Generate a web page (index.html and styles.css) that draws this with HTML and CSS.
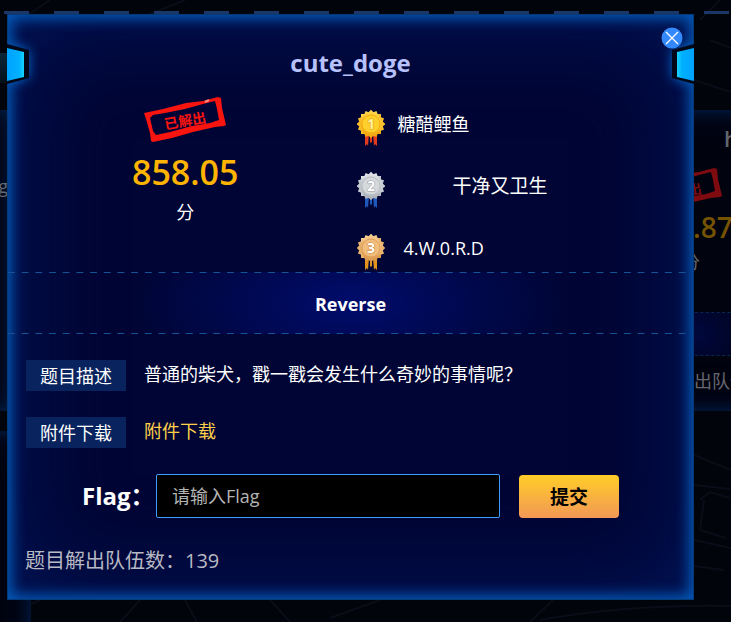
FILE: index.html
```html
<!DOCTYPE html>
<html lang="zh-CN">
<head>
<meta charset="utf-8">
<meta name="viewport" content="width=device-width, initial-scale=1">
<title>cute_doge</title>
<link rel="stylesheet" href="styles.css">
</head>
<body>
<svg class="defs" aria-hidden="true">
  <defs>
    <linearGradient id="gold" x1="0" y1="0" x2="1" y2="1"><stop offset="0" stop-color="#ffd84a"/><stop offset="1" stop-color="#f0a30c"/></linearGradient>
    <linearGradient id="silver" x1="0" y1="0" x2="1" y2="1"><stop offset="0" stop-color="#e2e5e8"/><stop offset="1" stop-color="#a9b0b8"/></linearGradient>
    <linearGradient id="bronze" x1="0" y1="0" x2="1" y2="1"><stop offset="0" stop-color="#f9cf92"/><stop offset="1" stop-color="#d9954a"/></linearGradient>
    <linearGradient id="tab" x1="0" y1="0" x2="1" y2="0"><stop offset="0" stop-color="#00a2ff"/><stop offset=".7" stop-color="#00b0ff"/><stop offset="1" stop-color="#14d4ff"/></linearGradient>
    <g id="burst">
      <rect x="-10" y="-10" width="20" height="20"/>
      <rect x="-10" y="-10" width="20" height="20" transform="rotate(22.5)"/>
      <rect x="-10" y="-10" width="20" height="20" transform="rotate(45)"/>
      <rect x="-10" y="-10" width="20" height="20" transform="rotate(67.5)"/>
    </g>
    <g id="ribbon">
      <path d="M8 25h4l-1 12-1-2-2 2zM16 25h4v12l-2-2-1 2zM13 27h2v6l-1 1-1-1z"/>
    </g>
    <g id="stamp-frame">
      <path fill-rule="evenodd" d="M0 16 19 12 42 6 59 4 74 0l3 1 1 10 4 17-2 1-9 1-22 5-21 6-19 4-2-1-1-8-4-14zM9 18 6 21l3 13 3 4 14-3 22-6 18-3 9-3-2-11-2-8-12 3-18 5-20 4z"/>
    </g>
  </defs>
</svg>

<div class="backdrop" aria-hidden="true">
  <svg class="roads" viewBox="0 0 731 622" preserveAspectRatio="none">
    <path d="M20 20 50 0M150 14 185 0M530 622 555 598M540 620Q630 604 731 606M694 455 731 470M694 540l37 8M694 566l30 4M694 485l36 4M700 500l10-8 20 6M704 500l-4 30 26 8M694 80l37 12M710 40l21 8M0 618l40-18M120 622l20-22M185 600l12 22M270 600l20 22M330 618l50-18 M700 20l20-20M694 320l37-18"/>
  </svg>
  <div class="dashes"></div>
  <div class="card card-prev"><span>g</span></div>
  <div class="card card-below"></div>
  <div class="tab-dim"></div>
  <div class="card card-next">
    <h3>hello</h3>
    <svg class="stamp" viewBox="0 0 82 46"><use href="#stamp-frame"/><text x="41" y="29" transform="rotate(-10 41 23)">已解出</text></svg>
    <p class="score">864.87</p>
    <p class="unit">分</p>
    <div class="band"></div>
    <p class="solved">题目解出队伍数</p>
  </div>
</div>

<main class="dialog" role="dialog" aria-labelledby="title">
  <svg class="tab tab-left" viewBox="0 0 22 40" aria-hidden="true"><path fill="#020817" d="M0 0 22 6V34L0 40z"/><path fill="url(#tab)" d="M0 4 17 8V33L0 37z"/></svg>
  <svg class="tab tab-right" viewBox="0 0 22 40" aria-hidden="true"><path fill="#020817" d="M0 0 22 6V34L0 40z"/><path fill="url(#tab)" d="M0 4 17 8V33L0 37z"/></svg>
  <button class="close" type="button" aria-label="关闭">
    <svg viewBox="0 0 22 22"><circle cx="11" cy="11" r="10.5" fill="#3389fb"/><path d="M5 5 17 17M17 5 5 17" stroke="#fff" stroke-width="1.3"/></svg>
  </button>

  <h1 class="title" id="title">cute_doge</h1>

  <section class="summary">
    <div class="points">
      <svg class="stamp" viewBox="0 0 82 46" role="img" aria-label="已解出"><use href="#stamp-frame"/><path d="M61 5 65 3" stroke="#ff8a80" stroke-width="2"/><text x="41" y="29" transform="rotate(-10 41 23)">已解出</text></svg>
      <p class="score">858.05</p>
      <p class="unit">分</p>
    </div>
    <ol class="ranks">
      <li>
        <svg class="medal" viewBox="0 0 28 38" aria-hidden="true"><use href="#ribbon" fill="#e23a1e"/><use href="#burst" x="14" y="15" fill="url(#gold)"/><circle cx="14" cy="15" r="9" fill="#ffd02b" stroke="#f5ae10"/><text x="14" y="20" fill="#fff3a0" stroke="#e39a08">1</text></svg>
        <span class="team team-first">糖醋鲤鱼</span>
      </li>
      <li>
        <svg class="medal" viewBox="0 0 28 38" aria-hidden="true"><use href="#ribbon" fill="#1f58bb"/><use href="#burst" x="14" y="15" fill="url(#silver)"/><circle cx="14" cy="15" r="9" fill="#d6d9dc" stroke="#b9bec4"/><text x="14" y="20" fill="#fff" stroke="#969ca4">2</text></svg>
        <span class="team team-second">干净又卫生</span>
      </li>
      <li>
        <svg class="medal" viewBox="0 0 28 38" aria-hidden="true"><use href="#ribbon" fill="#e3931c"/><use href="#burst" x="14" y="15" fill="url(#bronze)"/><circle cx="14" cy="15" r="9" fill="#f1bd7c" stroke="#e0a05a"/><text x="14" y="20" fill="#fff" stroke="#c98238">3</text></svg>
        <span class="team team-third">4.W.0.R.D</span>
      </li>
    </ol>
  </section>

  <h2 class="band">Reverse</h2>

  <dl class="details">
    <dt>题目描述</dt>
    <dd>普通的柴犬，戳一戳会发生什么奇妙的事情呢？</dd>
    <dt>附件下载</dt>
    <dd><a href="#attachment">附件下载</a></dd>
  </dl>

  <form class="flag-form">
    <label for="flag">Flag：</label>
    <input id="flag" type="text" placeholder="请输入Flag">
    <button class="submit" type="button">提交</button>
  </form>

  <p class="solved">题目解出队伍数：139</p>
</main>
</body>
</html>
```

FILE: styles.css
```css
* { box-sizing: border-box; }

body {
  margin: 0;
  min-height: 100vh;
  position: relative;
  overflow: hidden;
  display: flow-root;
  background: #02040c;
  color: #fff;
  font-family: "Open Sans", "Noto Sans CJK SC", sans-serif;
  font-size: 18px;
}

h1, h2, h3, p, ol, dl, dd { margin: 0; padding: 0; }

.defs { position: absolute; width: 0; height: 0; }

/* dimmed page behind the dialog */
.backdrop { position: absolute; inset: 0; overflow: hidden; }
.roads {
  position: absolute;
  width: 100%;
  height: 100%;
  fill: none;
  stroke: #0a0d17;
  stroke-width: 2;
}
.dashes {
  position: absolute;
  top: 11px;
  left: 4px;
  right: 0;
  height: 3px;
  background: repeating-linear-gradient(90deg, #1b3768 0 25px, transparent 25px 50px);
}
.card {
  position: absolute;
  background: #01030f;
  box-shadow: inset 0 0 16px #012450, inset 0 0 40px #010c28;
}
.card-prev { left: -260px; width: 270px; top: 110px; height: 301px; color: #66686f; text-align: right; padding: 64px 2px 0 0; }
.card-below { left: -260px; width: 291px; top: 431px; height: 260px; }
.tab-dim {
  position: absolute;
  left: 0;
  top: 53px;
  width: 10px;
  height: 30px;
  background: linear-gradient(#0b2638, #031019);
}
.card-next {
  left: 560px;
  right: -100px;
  top: 110px;
  height: 301px;
  color: #66666c;
}
.card-next h3 { padding: 12px 0 0 164px; font-size: 22px; font-weight: 600; line-height: 32px; }
.card-next .stamp { display: block; margin: 14px 0 0 80px; opacity: .5; }
.card-next .score { padding-left: 85px; color: #755300; font-size: 28px; line-height: 34px; margin-top: -4px; }
.card-next .unit { padding-left: 122px; line-height: 24px; margin-top: 6px; }
.card-next .band { margin-top: 38px; height: 44px; opacity: .5; }
.card-next .solved { color: #66666c; font-size: 18px; line-height: 26px; padding: 12px 0 0 80px; }

/* dialog */
.dialog {
  position: relative;
  margin: 14px 37px 22px 7px;
  padding: 26px 0 23px;
  background: #000535;
  border: 1px solid #043a78;
  box-shadow: inset 0 0 14px 4px #0459b8, inset 0 0 100px 4px #02175a;
}
.tab { position: absolute; top: 29px; width: 22px; height: 40px; filter: drop-shadow(0 0 6px #0367cc); }
.tab-left { left: -1px; clip-path: inset(-20px -20px -20px 0); }
.tab-right { right: -1px; transform: scaleX(-1); clip-path: inset(-20px -20px -20px 0); }
.close {
  position: absolute;
  top: 12px;
  right: 10px;
  width: 22px;
  height: 22px;
  padding: 0;
  border: 0;
  background: none;
}
.close svg { display: block; }

.title {
  color: #b7c1fb;
  font-size: 24px;
  font-weight: 700;
  line-height: 44px;
  text-align: center;
}

.summary { display: grid; grid-template-columns: 1fr 1fr; }
.points { padding: 12px 0 0 12px; text-align: center; }
.stamp { display: inline-block; width: 82px; height: 46px; fill: #f8140f; vertical-align: top; }
.stamp text { font-size: 14px; font-weight: 700; text-anchor: middle; }
.score { color: #ffb400; font-size: 34px; font-weight: 600; line-height: 40px; margin-top: 9px; }
.unit { line-height: 28px; margin-top: 6px; }
.ranks { list-style: none; padding: 24px 0 0 6px; }
.ranks li { display: flex; height: 62px; gap: 12px; }
.ranks li:last-child { height: 39px; }
.medal { flex: none; width: 28px; height: 38px; }
.medal text { font-size: 14px; font-weight: 700; text-anchor: middle; paint-order: stroke; stroke-width: 1; }
.team { line-height: 30px; padding-left: 1px; }
.team-second { padding-left: 56px; font-size: 19px; }
.team-third { padding-left: 7px; }

.band {
  height: 62px;
  font-size: 18px;
  font-weight: 700;
  line-height: 64px;
  text-align: center;
  background:
    linear-gradient(90deg, #155296 50%, transparent 50%) 0 0 / 2% 1px repeat-x,
    linear-gradient(90deg, #155296 50%, transparent 50%) 0 100% / 2% 1px repeat-x,
    radial-gradient(ellipse 32% 160% at center, #000c6b, transparent);
}

.details {
  display: grid;
  grid-template-columns: 100px 1fr;
  gap: 26px 18px;
  padding: 26px 18px 0;
}
.details dt {
  height: 31px;
  line-height: 33px;
  background: #08235e;
  text-align: center;
}
.details dd { line-height: 28px; }
.details a { color: #ffd04b; text-decoration: none; }

.flag-form { display: flex; align-items: center; padding: 26px 74px 0; }
.flag-form label { width: 74px; font-size: 24px; font-weight: 700; line-height: 44px; white-space: nowrap; }
.flag-form input {
  flex: 1;
  min-width: 0;
  height: 44px;
  padding: 0 15px;
  border: 1px solid #409eff;
  border-radius: 2px;
  background: #000;
  color: #fff;
  font: inherit;
}
.flag-form input::placeholder { color: #b4b4b4; opacity: 1; }
.submit {
  width: 100px;
  height: 43px;
  margin-left: 19px;
  padding: 0;
  border: 0;
  border-radius: 4px;
  background: linear-gradient(#ffcd28, #f29856);
  color: #000;
  font: inherit;
  font-size: 19px;
  font-weight: 700;
}

.solved { color: #b8b9c3; font-size: 20px; line-height: 30px; }
.dialog > .solved { padding: 28px 17px 0; }
```
